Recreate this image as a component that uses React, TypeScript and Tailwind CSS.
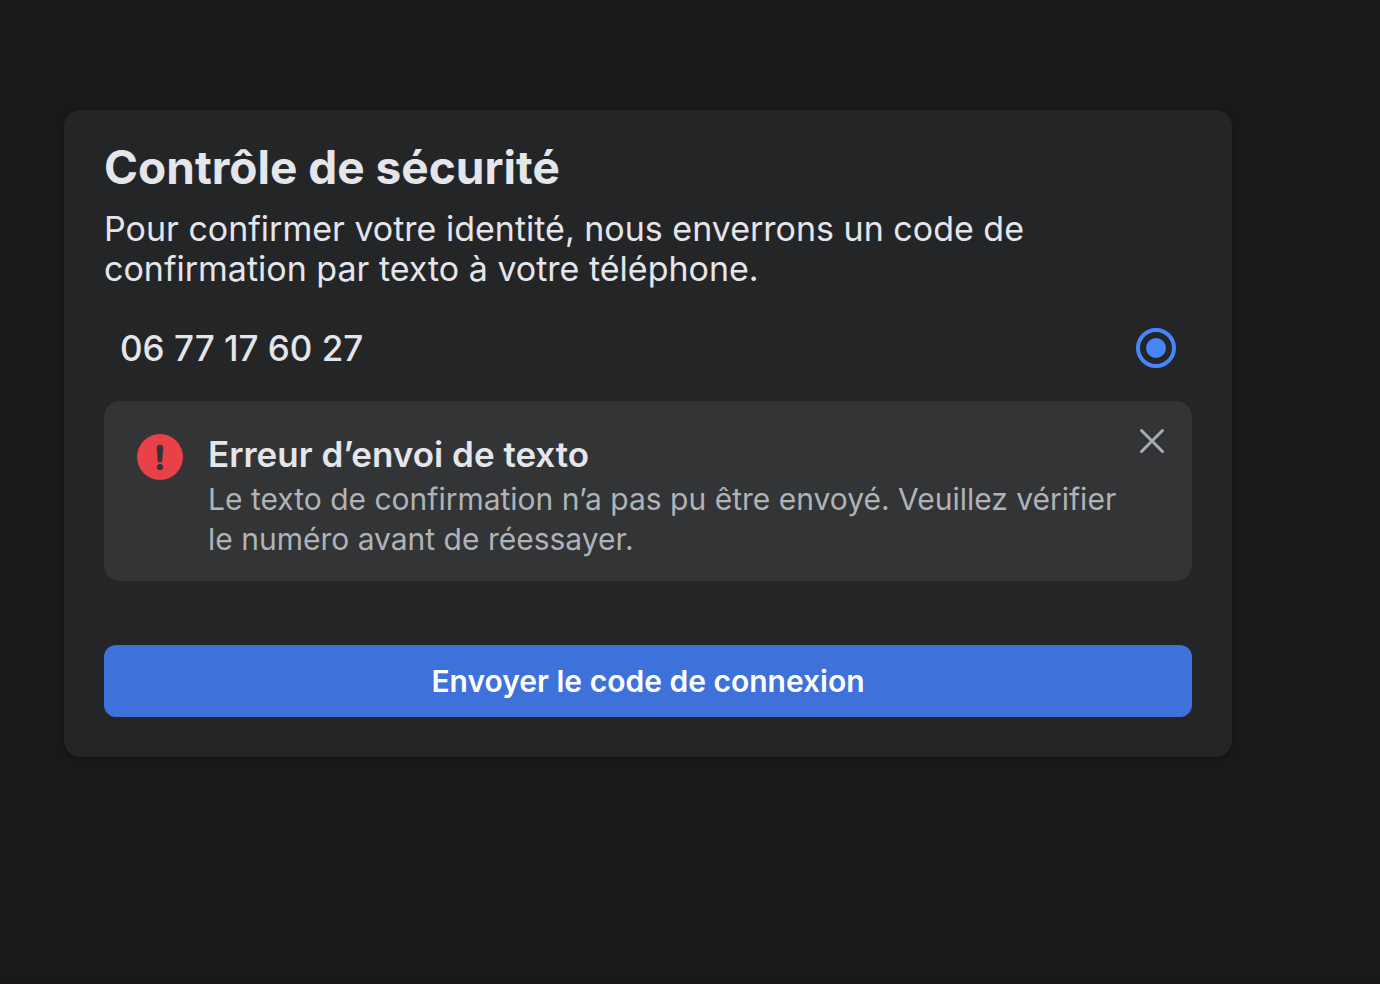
import { useState } from 'react';

export default function App() {
  const [showError, setShowError] = useState(true);
  return (
    <div className="min-h-screen border-b-2 border-[#1d1416] bg-[#18191a] pt-[110px] pr-[148px] pb-16 pl-16 font-['Inter',sans-serif] text-[#e4e6eb]">
      <main className="rounded-2xl bg-[#242526] px-10 pt-[27px] pb-10 shadow-[0_2px_4px_rgba(0,0,0,0.2)]">
        <h1 className="text-[46px] leading-[60px] font-bold">Contrôle de sécurité</h1>
        <p className="mt-3 max-w-[1000px] text-[34px] leading-10">
          Pour confirmer votre identité, nous enverrons un code de confirmation par texto à votre téléphone.
        </p>
        <label className="mt-[39px] flex items-center justify-between px-4">
          <span className="text-[35px] leading-10 font-medium">06 77 17 60 27</span>
          <input
            type="radio"
            name="phone"
            defaultChecked
            className="size-10 appearance-none rounded-full border-4 border-[#4785fa] bg-[#4785fa] bg-clip-content p-1.5"
          />
        </label>
        {showError && (
          <section role="alert" className="mt-[33px] flex items-start rounded-2xl bg-[#323436] px-6 pt-6 pb-[22px]">
            <svg viewBox="0 0 48 48" className="m-2 size-12 shrink-0" aria-hidden="true">
              <circle cx="24" cy="24" r="23" fill="#e94148" />
              <path d="M20.8 15a3.2 3.2 0 0 1 6.4 0l-.9 12.2a2.3 2.3 0 0 1-4.6 0z" fill="#323436" />
              <circle cx="24" cy="34" r="3.1" fill="#323436" />
            </svg>
            <div className="ml-4 flex-1 pt-2">
              <h2 className="text-[35px] leading-[42px] font-semibold">Erreur d’envoi de texto</h2>
              <p className="mt-1 text-[30px] leading-10 text-[#b0b3b8]">
                Le texto de confirmation n’a pas pu être envoyé. Veuillez vérifier le numéro avant de réessayer.
              </p>
            </div>
            <button type="button" aria-label="Fermer" onClick={() => setShowError(false)} className="shrink-0">
              <svg viewBox="0 0 32 32" className="size-8" fill="none" stroke="#a8abaf" strokeWidth="3" strokeLinecap="round">
                <path d="M5.5 5.5l21 21M26.5 5.5l-21 21" />
              </svg>
            </button>
          </section>
        )}
        <button type="button" className="mt-16 h-[72px] w-full rounded-xl bg-[#3e71da] text-[30px] leading-10 font-semibold text-white">
          Envoyer le code de connexion
        </button>
      </main>
    </div>
  );
}
